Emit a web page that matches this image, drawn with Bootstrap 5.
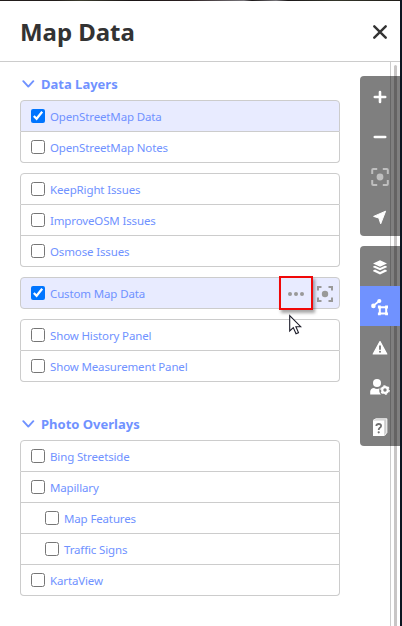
<!DOCTYPE html>
<html lang="en">
<head>
<meta charset="utf-8">
<meta name="viewport" content="width=device-width, initial-scale=1">
<title>Map Data</title>
<link href="https://cdn.jsdelivr.net/npm/bootstrap@5.3.0/dist/css/bootstrap.min.css" rel="stylesheet">
<style>
body{width:402px;height:626px;overflow:hidden;background:#fff;font-family:"Noto Sans","Open Sans",sans-serif;font-size:11.5px;line-height:18px;color:#333}
.app{width:402px;height:626px;border-right:2px solid #0b1520}
.imagery{height:1px;background:linear-gradient(90deg,#221d1b 0 14%,#3c3c2e 20%,#191415 33%,#2b1f20 47%,#77757a 61%,#1b1718 63%,#77757a 69%,#1b1718 72%,#34362a 84%,#201d18)}
.pane-head{height:61px;border-bottom:1px solid #ccc;padding:2px 13px 0 20px}
.pane-title{font-size:24px;line-height:30px;font-weight:700;letter-spacing:-.05px;color:#333}
.pane-body{height:564px;width:391px;border-right:1px solid #ccc;padding:13px 50px 0 20px}
.sect{font-size:13px;font-weight:700;line-height:18px;color:#7092ff;height:18px;gap:6px;padding-left:2px}
.layers{--bs-list-group-border-color:#ccc;--bs-list-group-border-radius:4px;--bs-list-group-color:#7092ff;margin-bottom:10px}
.layers .list-group-item{height:31px;padding:0 0 0 10px;gap:5px;border-color:#ccc}
.layers .list-group-item:first-child{height:32px}
.layers .on{background:#e8ebff}
.layers .sub{padding-left:24px}
.layers input{width:14px;height:14px;margin:0;flex:none;position:static}
.layers .t{letter-spacing:-.14px;padding-top:2px}
.sect+.layers{margin-top:7px}
.second{margin-top:33px}
.t{white-space:nowrap}
.thumb{right:3px;top:65px;width:3px;height:561px;background:#c8c6c6;border-radius:2px 2px 0 0}
.tools{right:0;top:76px;gap:10px}
.tool-set{width:40px;background:rgba(0,0,0,.5);border-radius:4px 0 0 4px;overflow:hidden}
.tool{width:40px;height:40px;border:0;padding:0;background:none;color:#fff}
.modes .tool{padding-top:2px}
.tool.current{background:#7092ff}
.tool svg,.pane-head svg,.sect svg{display:block}
.callout{left:279px;top:276px;width:34px;height:34px;border:2px solid #f00808;box-shadow:2px 3px 3px rgba(0,0,0,.35)}
.pointer{left:288px;top:314px}
.row-icons{gap:11px;margin-right:5px;color:#999}
</style>
<script src="https://cdn.jsdelivr.net/npm/bootstrap@5.3.0/dist/js/bootstrap.bundle.min.js"></script>
</head>
<body>
<div class="app position-relative">
<div class="imagery"></div>
<header class="pane-head d-flex align-items-center justify-content-between">
<h1 class="pane-title m-0">Map Data</h1>
<svg width="14" height="14" viewBox="0 0 14 14" fill="none" stroke="#333" stroke-width="2.4" stroke-linecap="round"><path d="M1.3 1.3 12.7 12.7M12.7 1.3 1.3 12.7"/></svg>
</header>
<main class="pane-body">
<div class="sect d-flex align-items-center"><svg width="13" height="8" viewBox="0 0 13 8" fill="none" stroke="currentColor" stroke-width="1.9" stroke-linecap="round" stroke-linejoin="round"><path d="M1.3 1.2 6.3 6.6 11.3 1.2"/></svg><span class="t">Data Layers</span></div>
<div class="layers list-group">
<label class="list-group-item d-flex align-items-center on"><input type="checkbox" checked><span class="t">OpenStreetMap Data</span></label>
<label class="list-group-item d-flex align-items-center"><input type="checkbox"><span class="t">OpenStreetMap Notes</span></label>
</div>
<div class="layers list-group">
<label class="list-group-item d-flex align-items-center"><input type="checkbox"><span class="t">KeepRight Issues</span></label>
<label class="list-group-item d-flex align-items-center"><input type="checkbox"><span class="t">ImproveOSM Issues</span></label>
<label class="list-group-item d-flex align-items-center"><input type="checkbox"><span class="t">Osmose Issues</span></label>
</div>
<div class="layers list-group">
<label class="list-group-item d-flex align-items-center on"><input type="checkbox" checked><span class="t">Custom Map Data</span>
<span class="row-icons d-flex align-items-center ms-auto"><svg width="18" height="16" viewBox="0 0 18 16" fill="currentColor"><circle cx="3" cy="9" r="2"/><circle cx="9" cy="9" r="2"/><circle cx="15" cy="9" r="2"/></svg><svg width="18" height="18" viewBox="0 0 18 18" fill="none" stroke="currentColor" stroke-width="2"><path d="M2 6.5V3H5.5M12.5 3H16V6.5M16 13.5V17H12.5M5.5 17H2V13.5"/><circle cx="9" cy="10" r="3.2" fill="currentColor" stroke="none"/></svg></span></label>
</div>
<div class="layers list-group">
<label class="list-group-item d-flex align-items-center"><input type="checkbox"><span class="t">Show History Panel</span></label>
<label class="list-group-item d-flex align-items-center"><input type="checkbox"><span class="t">Show Measurement Panel</span></label>
</div>
<div class="sect second d-flex align-items-center"><svg width="13" height="8" viewBox="0 0 13 8" fill="none" stroke="currentColor" stroke-width="1.9" stroke-linecap="round" stroke-linejoin="round"><path d="M1.3 1.2 6.3 6.6 11.3 1.2"/></svg><span class="t">Photo Overlays</span></div>
<div class="layers list-group">
<label class="list-group-item d-flex align-items-center"><input type="checkbox"><span class="t">Bing Streetside</span></label>
<label class="list-group-item d-flex align-items-center"><input type="checkbox"><span class="t">Mapillary</span></label>
<label class="list-group-item d-flex align-items-center sub"><input type="checkbox"><span class="t">Map Features</span></label>
<label class="list-group-item d-flex align-items-center sub"><input type="checkbox"><span class="t">Traffic Signs</span></label>
<label class="list-group-item d-flex align-items-center"><input type="checkbox"><span class="t">KartaView</span></label>
</div>
</main>
<div class="thumb position-absolute"></div>
<nav class="tools position-absolute d-flex flex-column">
<div class="tool-set d-flex flex-column">
<button class="tool d-flex align-items-center justify-content-center" aria-label="Zoom in"><svg width="20" height="20" viewBox="0 0 20 20" stroke="currentColor" stroke-width="2.6" stroke-linecap="round"><path d="M10 6V16M4.8 11H15.2"/></svg></button>
<button class="tool d-flex align-items-center justify-content-center" aria-label="Zoom out"><svg width="20" height="20" viewBox="0 0 20 20" stroke="currentColor" stroke-width="2.6" stroke-linecap="round"><path d="M4.8 11H15.2"/></svg></button>
<button class="tool d-flex align-items-center justify-content-center" aria-label="Zoom to selection"><svg width="20" height="20" viewBox="0 0 20 20" fill="none" stroke="#bfbfbf" stroke-width="2"><path d="M2.2 8V4Q2.2 3 3.2 3H7.2M12.8 3H16.8Q17.8 3 17.8 4V8M17.8 14V18Q17.8 19 16.8 19H12.8M7.2 19H3.2Q2.2 19 2.2 18V14"/><circle cx="10" cy="11" r="3.4" fill="#bfbfbf" stroke="none"/></svg></button>
<button class="tool d-flex align-items-center justify-content-center" aria-label="My location"><svg width="20" height="20" viewBox="0 0 20 20" fill="currentColor" stroke="currentColor" stroke-linejoin="round"><path d="M15.6 5.2 3.6 10.4 8.8 12 10.7 17.8Z"/></svg></button>
</div>
<div class="tool-set modes d-flex flex-column">
<button class="tool d-flex align-items-center justify-content-center" aria-label="Background"><svg width="20" height="20" viewBox="0 0 20 20" fill="currentColor"><path d="M10 3.2 17 6.4 10 9.7 3 6.4ZM3.2 9.4 5 8.7 10 11.1 15 8.7 16.8 9.4Q17.3 9.8 16.8 10.2L10 13.3 3.2 10.2Q2.7 9.8 3.2 9.4ZM3.2 13.4 5 12.5 10 14.9 15 12.5 16.8 13.4Q17.3 13.8 16.8 14.2L10 17.6 3.2 14.2Q2.7 13.8 3.2 13.4Z"/></svg></button>
<button class="tool current d-flex align-items-center justify-content-center" aria-label="Map data"><svg width="20" height="20" viewBox="0 0 20 20" fill="currentColor"><path d="M3.2 8.9 9.5 3.8" stroke="currentColor" stroke-width="1.8"/><circle cx="3.4" cy="8.9" r="2.3"/><circle cx="9.3" cy="4" r="2.1"/><path d="M9.8 10.2H16.2V16.6H9.8Z" fill="none" stroke="currentColor" stroke-width="2"/><path d="M7.9 8.6H10.8V11.4H7.9ZM15.1 8.6H18V11.4H15.1ZM7.9 15.4H10.8V18.2H7.9ZM15.1 15.4H18V18.2H15.1Z"/></svg></button>
<button class="tool d-flex align-items-center justify-content-center" aria-label="Issues"><svg width="20" height="20" viewBox="0 0 20 20"><path d="M10 4.6 16.8 17H3.2Z" fill="currentColor" stroke="currentColor" stroke-width="1.2" stroke-linejoin="round"/><path d="M10 8.4V12.7" stroke="#777" stroke-width="1.8"/><circle cx="10" cy="14.8" r="1" fill="#777"/></svg></button>
<button class="tool d-flex align-items-center justify-content-center" aria-label="Preferences"><svg width="20" height="20" viewBox="0 0 20 20" fill="currentColor"><ellipse cx="7" cy="6" rx="4" ry="4.1"/><path d="M.2 17.6V14.5Q.6 11.2 4 11Q7 12.8 9.6 11.2Q8.4 15 11 17.6Z"/><circle cx="15" cy="13" r="2.8" fill="none" stroke="currentColor" stroke-width="2.2"/><circle cx="15" cy="13" r="4.2" fill="none" stroke="currentColor" stroke-width="1.3" stroke-dasharray="2.2 2.2"/></svg></button>
<button class="tool d-flex align-items-center justify-content-center" aria-label="Help"><svg width="20" height="20" viewBox="0 0 20 20"><path d="M3 3.6 6 1.5H17.2V15.5L14.7 19H3Z" fill="#ccc"/><path d="M3 3.5H14.2V19H3Z" fill="#fff"/><path d="M3.2 3.2 6 1.8H16.8V15.5L14.8 18.2" fill="none" stroke="#fff" stroke-width=".8"/><path d="M6.3 9Q6.5 7 8.7 7Q11.2 7 11.1 9Q11 10.2 9.6 10.9Q8.7 11.5 8.7 13" fill="none" stroke="#707070" stroke-width="1.8"/><circle cx="8.7" cy="15.3" r="1.1" fill="#707070"/></svg></button>
</div>
</nav>
<div class="callout position-absolute"></div>
<svg class="pointer position-absolute" width="14" height="22" viewBox="0 0 14 22"><path d="M1.7 1.5V17L5.3 13.6 8 19.7 10.5 18.6 7.9 12.7H12.7Z" fill="#fff" stroke="#1c1c28" stroke-width="1.1"/></svg>
</div>
</body>
</html>
